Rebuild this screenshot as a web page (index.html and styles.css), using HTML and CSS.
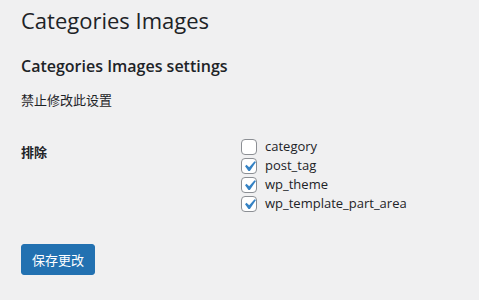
FILE: index.html
```html
<!DOCTYPE html>
<html lang="zh-CN">
<head>
<meta charset="utf-8">
<title>Categories Images</title>
<link rel="stylesheet" href="styles.css">
</head>
<body>
<div class="wrap">
  <h1 class="page-title">Categories Images</h1>
  <h2 class="section-title">Categories Images settings</h2>
  <p class="desc">禁止修改此设置</p>
  <div class="form-row">
    <div class="form-label">排除</div>
    <div class="form-field">
      <label class="opt"><span class="box"></span><span class="opt-text">category</span></label>
      <label class="opt"><span class="box"><svg class="tick" viewBox="0 0 20 20"><path d="M14.83 4.89l1.34.94-5.81 8.38H9.02L5.78 9.67l1.34-1.25 2.57 2.4z"/></svg></span><span class="opt-text">post_tag</span></label>
      <label class="opt"><span class="box"><svg class="tick" viewBox="0 0 20 20"><path d="M14.83 4.89l1.34.94-5.81 8.38H9.02L5.78 9.67l1.34-1.25 2.57 2.4z"/></svg></span><span class="opt-text">wp_theme</span></label>
      <label class="opt"><span class="box"><svg class="tick" viewBox="0 0 20 20"><path d="M14.83 4.89l1.34.94-5.81 8.38H9.02L5.78 9.67l1.34-1.25 2.57 2.4z"/></svg></span><span class="opt-text">wp_template_part_area</span></label>
    </div>
  </div>
  <div class="actions">
    <button class="btn-primary" type="button">保存更改</button>
  </div>
</div>
</body>
</html>
```

FILE: styles.css
```css
html, body {
  margin: 0;
  padding: 0;
  background: #f0f0f1;
}
body {
  color: #1d2327;
  font-family: "Open Sans", "Noto Sans CJK SC", sans-serif;
  font-size: 13px;
  line-height: 1.4;
}
.wrap {
  padding: 0 0 0 21px;
}
.page-title {
  margin: 0;
  padding: 5px 0 0;
  font-size: 22px;
  font-weight: 400;
  line-height: 30px;
}
.section-title {
  margin: 20px 0 0;
  font-size: 16px;
  font-weight: 600;
  line-height: 22px;
}
.desc {
  margin: 14px 0 0;
  line-height: 18px;
}
.form-row {
  display: flex;
  margin-top: 12px;
}
.form-label {
  width: 220px;
  flex: none;
  font-weight: 700;
  line-height: 18px;
  padding-top: 22px;
}
.form-field {
  display: flex;
  flex-direction: column;
  padding-top: 16px;
}
.opt {
  display: flex;
  align-items: center;
  height: 19px;
}
.box {
  position: relative;
  width: 14px;
  height: 14px;
  border: 1px solid #8c8f94;
  border-radius: 4px;
  background: #fff;
  margin-right: 8px;
  flex: none;
}
.tick {
  position: absolute;
  left: -3px;
  top: -3px;
  width: 21px;
  height: 21px;
  fill: #3582c4;
}
.opt-text {
  line-height: 19px;
}
.actions {
  margin-top: 31px;
}
.btn-primary {
  display: inline-block;
  height: 31px;
  padding: 0 10px;
  border: 1px solid #2271b1;
  border-radius: 3px;
  background: #2271b1;
  color: #fff;
  font-family: "Noto Sans CJK SC", sans-serif;
  font-size: 13px;
  line-height: 29px;
}
```
